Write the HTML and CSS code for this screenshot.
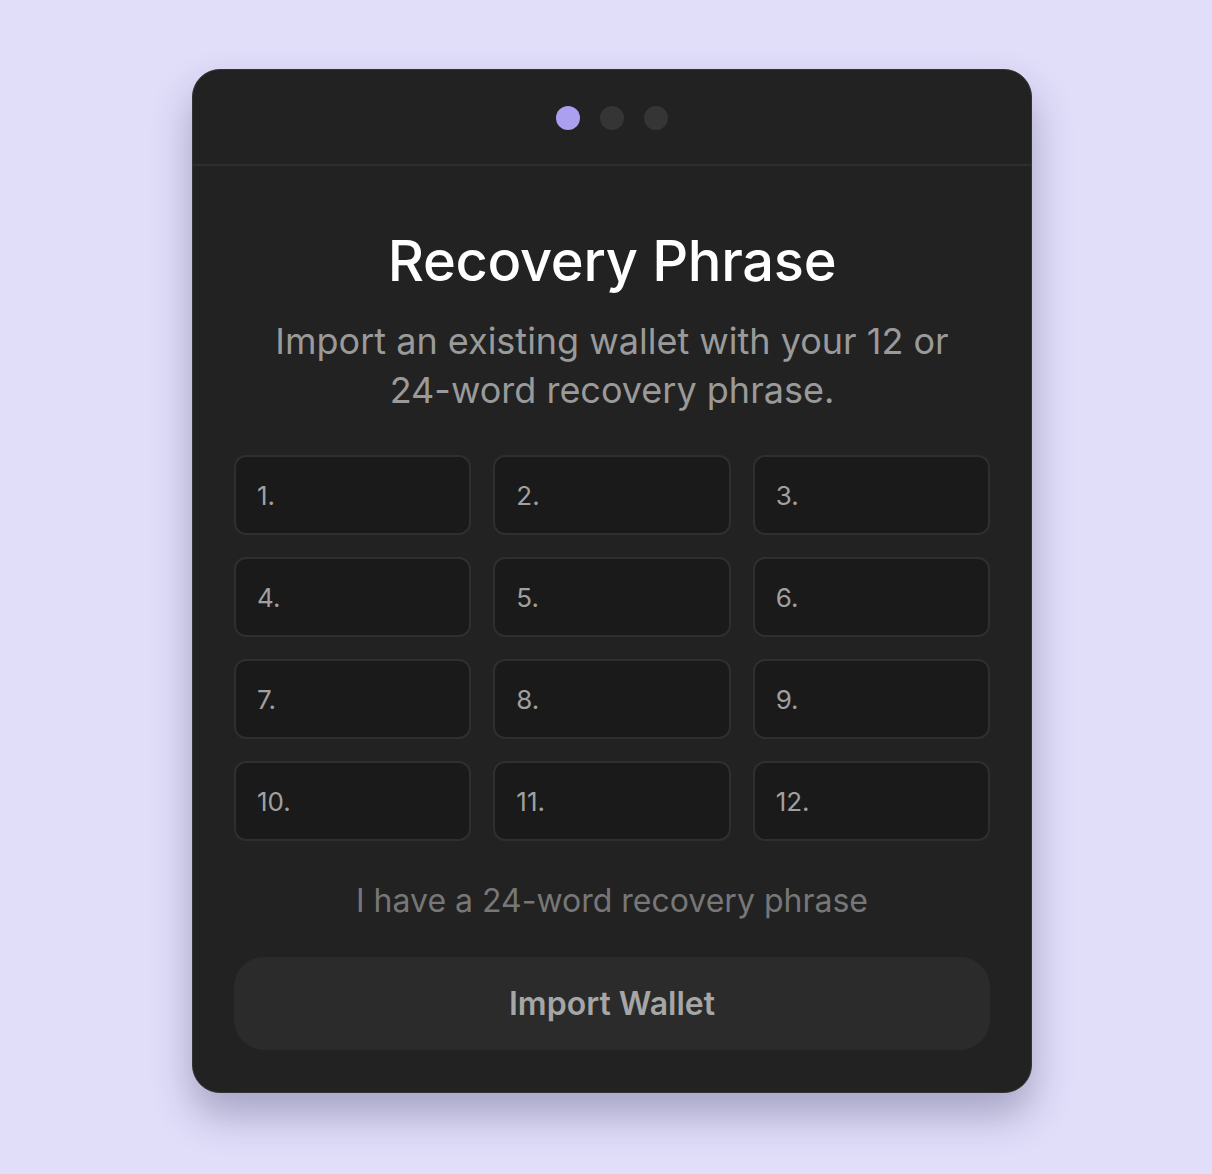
FILE: index.html
```html
<!DOCTYPE html>
<html>
<head>
<meta charset="utf-8">
<link rel="stylesheet" href="styles.css">
</head>
<body>
<div class="card">
  <div class="header">
    <span class="dot active"></span>
    <span class="dot"></span>
    <span class="dot"></span>
  </div>
  <div class="content">
    <h1 class="title">Recovery Phrase</h1>
    <p class="subtitle">Import an existing wallet with your 12 or 24-word recovery phrase.</p>
    <div class="grid">
      <div class="cell">1.</div>
      <div class="cell">2.</div>
      <div class="cell">3.</div>
      <div class="cell">4.</div>
      <div class="cell">5.</div>
      <div class="cell">6.</div>
      <div class="cell">7.</div>
      <div class="cell">8.</div>
      <div class="cell">9.</div>
      <div class="cell">10.</div>
      <div class="cell">11.</div>
      <div class="cell">12.</div>
    </div>
    <div class="toggle">I have a 24-word recovery phrase</div>
    <button class="import">Import Wallet</button>
  </div>
</div>
</body>
</html>
```
FILE: styles.css
```css
html, body {
  margin: 0;
  padding: 0;
}
body {
  background: #e1defa;
  font-family: Inter, "Noto Sans", sans-serif;
  min-height: 1174px;
  box-sizing: border-box;
  padding-top: 69px;
}
.card {
  margin-left: 192px;
  width: 840px;
  box-sizing: border-box;
  background: #222222;
  border: 1px solid #333333;
  border-radius: 28px;
  box-shadow: 0 22px 40px rgba(40, 36, 80, 0.32);
}
.header {
  height: 96px;
  display: flex;
  justify-content: center;
  align-items: center;
  gap: 20px;
  border-bottom: 2px solid #2e2e2e;
  box-sizing: border-box;
  padding-top: 2px;
}
.dot {
  width: 24px;
  height: 24px;
  border-radius: 50%;
  background: #353535;
}
.dot.active {
  background: #ab9ff0;
}
.content {
  padding: 60px 41px 42px;
  display: flex;
  flex-direction: column;
  align-items: center;
}
.title {
  margin: 0;
  font-size: 56px;
  font-weight: 500;
  color: #ffffff;
  line-height: 70px;
  letter-spacing: -0.3px;
}
.subtitle {
  margin: 21px 0 0;
  width: 720px;
  text-align: center;
  font-size: 36px;
  line-height: 49px;
  color: #9a9a9a;
}
.grid {
  margin-top: 40px;
  width: 100%;
  display: grid;
  grid-template-columns: repeat(3, 1fr);
  gap: 22px 22px;
}
.cell {
  height: 80px;
  box-sizing: border-box;
  background: #1a1a1a;
  border: 2px solid #2f2f2f;
  border-radius: 12px;
  display: flex;
  align-items: center;
  padding-left: 21px;
  font-size: 26px;
  color: #a0a0a0;
}
.toggle {
  margin-top: 40px;
  font-size: 32px;
  color: #777777;
  line-height: 40px;
}
.import {
  margin-top: 36px;
  width: 100%;
  height: 93px;
  border: none;
  border-radius: 30px;
  background: #2b2b2b;
  font-family: Inter, "Noto Sans", sans-serif;
  font-size: 32px;
  font-weight: 600;
  color: #a6a6a6;
}
```
